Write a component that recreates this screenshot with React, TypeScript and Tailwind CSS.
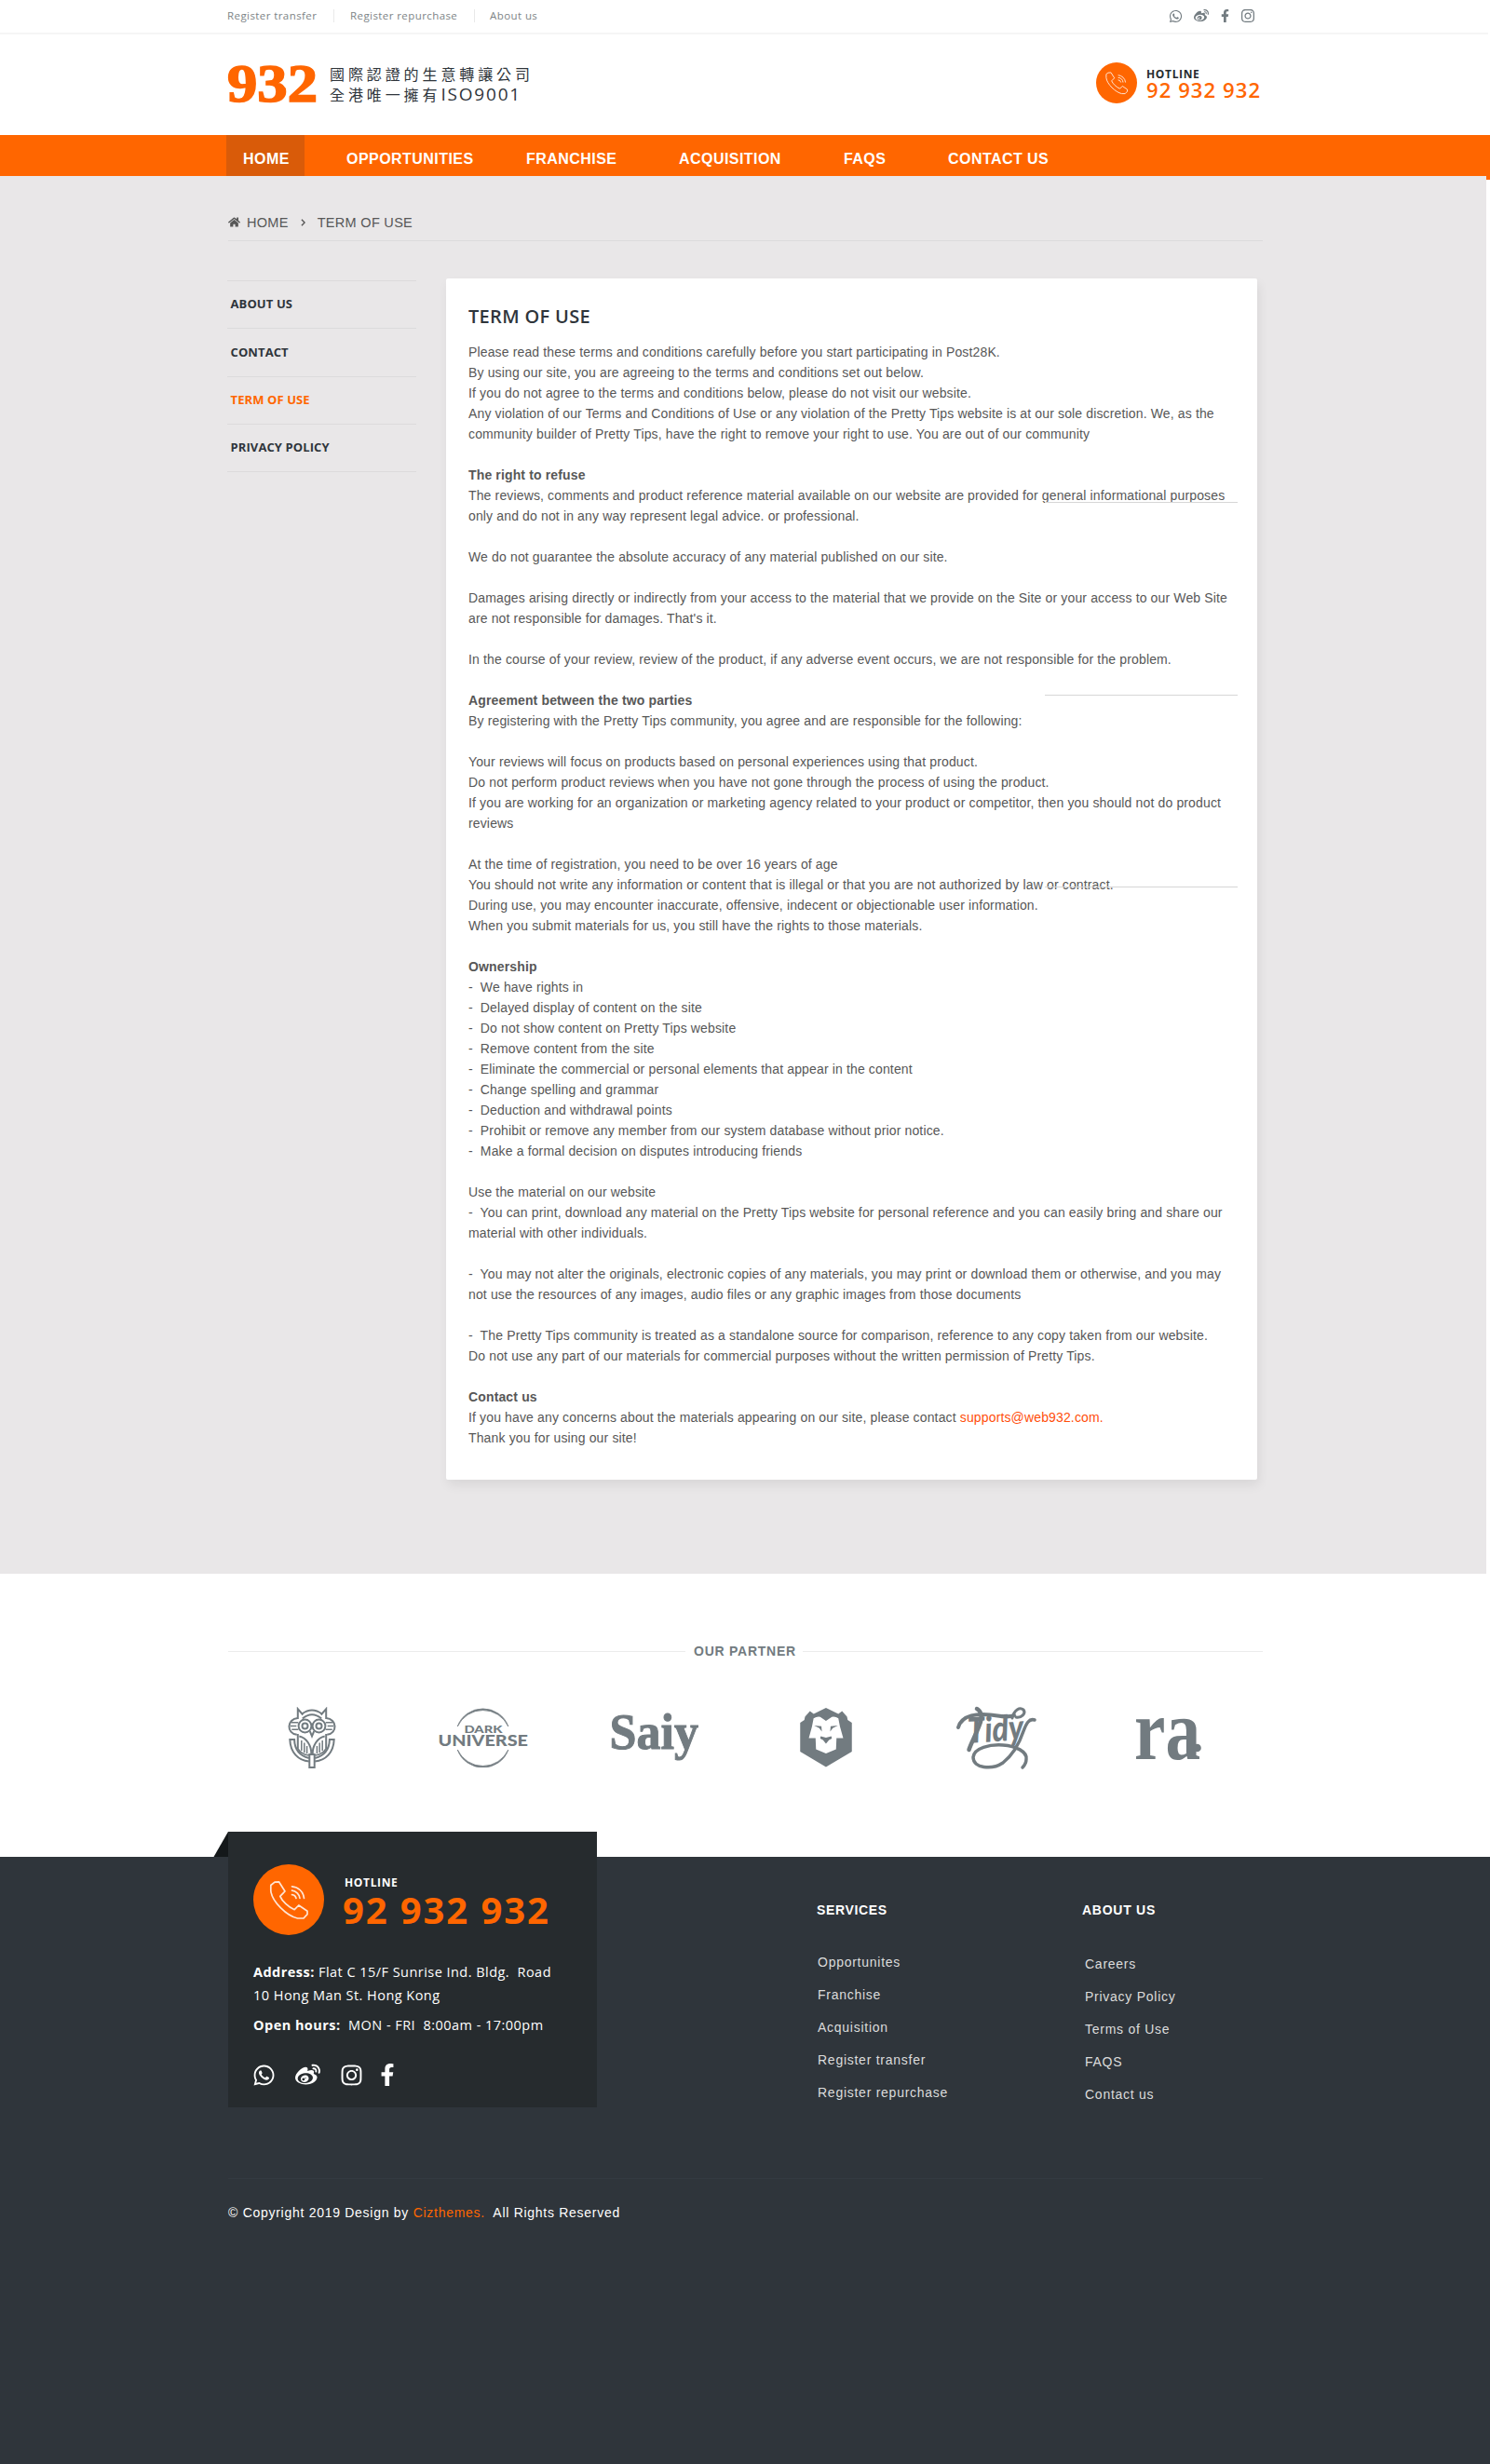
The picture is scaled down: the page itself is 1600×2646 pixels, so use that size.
import React from "react";
import { FaWhatsapp, FaWeibo, FaInstagram, FaFacebookF, FaHome } from "react-icons/fa";

const navItems = [
  { label: "OPPORTUNITIES", cls: "w-[193px]" },
  { label: "FRANCHISE", cls: "w-[164px]" },
  { label: "ACQUISITION", cls: "w-[177px]" },
  { label: "FAQS", cls: "w-[112px]" },
  { label: "CONTACT US", cls: "w-[120px]" },
];

const services = ["Opportunites", "Franchise", "Acquisition", "Register transfer", "Register repurchase"];
const about = ["Careers", "Privacy Policy", "Terms of Use", "FAQS", "Contact us"];

type Line = { t: string; b?: boolean };
const terms: Line[] = [
  { t: "Please read these terms and conditions carefully before you start participating in Post28K." },
  { t: "By using our site, you are agreeing to the terms and conditions set out below." },
  { t: "If you do not agree to the terms and conditions below, please do not visit our website." },
  { t: "Any violation of our Terms and Conditions of Use or any violation of the Pretty Tips website is at our sole discretion. We, as the" },
  { t: "community builder of Pretty Tips, have the right to remove your right to use. You are out of our community" },
  { t: "" },
  { t: "The right to refuse", b: true },
  { t: "The reviews, comments and product reference material available on our website are provided for general informational purposes" },
  { t: "only and do not in any way represent legal advice. or professional." },
  { t: "" },
  { t: "We do not guarantee the absolute accuracy of any material published on our site." },
  { t: "" },
  { t: "Damages arising directly or indirectly from your access to the material that we provide on the Site or your access to our Web Site" },
  { t: "are not responsible for damages. That's it." },
  { t: "" },
  { t: "In the course of your review, review of the product, if any adverse event occurs, we are not responsible for the problem." },
  { t: "" },
  { t: "Agreement between the two parties", b: true },
  { t: "By registering with the Pretty Tips community, you agree and are responsible for the following:" },
  { t: "" },
  { t: "Your reviews will focus on products based on personal experiences using that product." },
  { t: "Do not perform product reviews when you have not gone through the process of using the product." },
  { t: "If you are working for an organization or marketing agency related to your product or competitor, then you should not do product" },
  { t: "reviews" },
  { t: "" },
  { t: "At the time of registration, you need to be over 16 years of age" },
  { t: "You should not write any information or content that is illegal or that you are not authorized by law or contract." },
  { t: "During use, you may encounter inaccurate, offensive, indecent or objectionable user information." },
  { t: "When you submit materials for us, you still have the rights to those materials." },
  { t: "" },
  { t: "Ownership", b: true },
  { t: "-  We have rights in" },
  { t: "-  Delayed display of content on the site" },
  { t: "-  Do not show content on Pretty Tips website" },
  { t: "-  Remove content from the site" },
  { t: "-  Eliminate the commercial or personal elements that appear in the content" },
  { t: "-  Change spelling and grammar" },
  { t: "-  Deduction and withdrawal points" },
  { t: "-  Prohibit or remove any member from our system database without prior notice." },
  { t: "-  Make a formal decision on disputes introducing friends" },
  { t: "" },
  { t: "Use the material on our website" },
  { t: "-  You can print, download any material on the Pretty Tips website for personal reference and you can easily bring and share our" },
  { t: "material with other individuals." },
  { t: "" },
  { t: "-  You may not alter the originals, electronic copies of any materials, you may print or download them or otherwise, and you may" },
  { t: "not use the resources of any images, audio files or any graphic images from those documents" },
  { t: "" },
  { t: "-  The Pretty Tips community is treated as a standalone source for comparison, reference to any copy taken from our website." },
  { t: "Do not use any part of our materials for commercial purposes without the written permission of Pretty Tips." },
  { t: "" },
  { t: "Contact us", b: true },
];

function PhoneBadge({ className }: { className: string }) {
  return (
    <svg viewBox="0 0 76 76" className={className} fill="none" stroke="#ffe6d5" strokeLinejoin="round" strokeLinecap="round">
      <circle cx="38" cy="38" r="38" fill="#ff6600" stroke="none" />
      <path strokeWidth="1.7" d="M23 19.2L27.5 18.8L34 29L28.8 34.3C31 39.5 37.5 46 44.2 48.7L48.8 44L58 50.2V53.7L54 58H47.5C36 55.5 20 40 18.8 28.5V22.5Z" />
      <path strokeWidth="1.7" d="M41.5 23.8A14 14 0 0 1 54.5 36.5M41.5 28.2A9.5 9.5 0 0 1 50 36.5M41.5 32.6A5 5 0 0 1 46 36.5" />
    </svg>
  );
}

function Owl() {
  return (
    <svg viewBox="0 0 51.4 66" className="h-[66px] w-[52px]" fill="none" stroke="#727b80" strokeWidth="2">
      <path d="M10.5 13V2.2L16 8.5M40.9 13V2.2L35.4 8.5" />
      <path d="M15 7.5Q25.7 -.5 36.4 7.5M15.5 12.5Q25.7 4 35.9 12.5" />
      <path d="M10.5 12C-1.5 13 -2 28.5 9.5 29.8M40.9 12C52.9 13 53.4 28.5 41.900 29.8" />
      <path d="M3.5 16.7H11M2.5 20.5H9M4 24.3H11M47.9 16.7H40.4M48.9 20.5H42.4M47.4 24.3H40.4" strokeWidth="1.6" />
      <circle cx="18.2" cy="20.5" r="6.9" />
      <circle cx="33.2" cy="20.5" r="6.9" />
      <circle cx="18.2" cy="20.5" r="3" />
      <circle cx="33.2" cy="20.5" r="3" />
      <path d="M23.5 26.2L25.7 31.5L27.9 26.2" />
      <path d="M10.5 29V44.5M40.9 29V44.5M12 31.5C20 33 25 42 25 50M39.4 31.5C31.4 33 26.4 42 26.4 50" />
      <path d="M14.5 36V47M17.5 38.5V49M20.3 42V50M36.9 36V47M33.9 38.5V49M31.1 42V50" strokeWidth="1.5" />
      <path d="M22.5 55C11 52 7 44 6.8 35H2C2.5 49 11 57.5 22.5 58.5M28.9 55C40.4 52 44.4 44 44.6 35H49.4C48.9 49 40.4 57.5 28.9 58.5" />
      <path d="M10 44C13 49 17 51.5 22.5 52M41.4 44C38.4 49 34.4 51.5 28.9 52" strokeWidth="1.5" />
      <path d="M23 51V65H28.4V51Z" />
    </svg>
  );
}

function DarkUniverse() {
  return (
    <svg viewBox="470 1834 98 64" className="h-[64px] w-[98px]" fill="#727b80" fontFamily="Lato, sans-serif">
      <path d="M491.3 1854A30 30 0 0 1 545.8 1854A28.8 28.2 0 0 0 491.3 1854ZM491.3 1879A30 30 0 0 0 545.8 1879A28.8 28.2 0 0 1 491.3 1879Z" stroke="#727b80" strokeWidth=".8" />
      <text x="498.5" y="1860.7" fontSize="11.5" fontWeight="900" textLength="41" lengthAdjust="spacingAndGlyphs">DARK</text>
      <text x="470.5" y="1875" fontSize="16.5" fontWeight="900" textLength="96.5" lengthAdjust="spacingAndGlyphs">UNIVERSE</text>
    </svg>
  );
}

function Saiy() {
  return (
    <svg viewBox="655 1838 96 56" className="h-[56px] w-[96px] overflow-visible" fill="#727b80">
      <text x="654.5" y="1877.5" fontSize="55" fontFamily="Liberation Serif, serif" fontWeight="700" textLength="95.5" lengthAdjust="spacingAndGlyphs" stroke="#727b80" strokeWidth="1">Saiy</text>
    </svg>
  );
}

function Lion() {
  return (
    <svg viewBox="0 0 55.5 64" className="h-[64px] w-[56px]" fill="#727b80">
      <path d="M27.7 0L41 6.5L45 3.5L50.3 9.5L51 13L55.5 16V47L27.7 63.5L0 47V16L4.5 13L5.2 9.5L10.5 3.5L14.5 6.5Z" />
      <path fill="#fff" d="M14.4 11.2Q18 9 21.5 9.7L27.7 14L34 9.7Q38 9 41 11.2L42.7 20L46.2 32.5H39L38.5 44.5L27.7 49L17 44.5L16.5 32.5H9.3L12.7 20Z" />
      <path d="M15 19L22.8 19.7L23.3 25.5L20.5 21.8ZM40.5 19L32.7 19.7L32.2 25.5L35 21.8ZM22 30.5L27.7 32L33.5 30.5L34 33L31 34.5L27.7 38.5L24.5 34.5L21.5 33Z" />
    </svg>
  );
}

function Tidy() {
  return (
    <svg viewBox="0 0 87 67" className="h-[67px] w-[87px] overflow-visible" fill="none" stroke="#727b80" strokeLinecap="round">
      <text x="13" y="39" transform="rotate(-4 13 39)" fontSize="38" fontFamily="Lato, sans-serif" fontStyle="italic" fontWeight="900" textLength="60" lengthAdjust="spacingAndGlyphs" fill="#727b80" stroke="none">Tidy</text>
      <path strokeWidth="4" d="M2 22C6 8 24 7 36 8.5C48 10 56 12 62 9" />
      <path strokeWidth="3" d="M60 12C62 3 68 0 72 3C75 7 70 12 64 11" />
      <path strokeWidth="4.5" d="M22 2C26 4 28 10 26 16C22 28 16 38 13.5 46" />
      <path strokeWidth="3.5" d="M84 14C78 12 75 18 72 26C68 38 60 52 50 60C38 68 18 66 18 54C19 44 36 40 50 41C64 42 76 48 75 56C75 60 74 62 71 65" />
    </svg>
  );
}

function Ra() {
  return (
    <svg viewBox="1219 1838 72 56" className="h-[56px] w-[72px] overflow-visible" fill="#727b80">
      <text x="1218" y="1888.5" fontSize="94" fontFamily="Liberation Serif, serif" fontWeight="700" textLength="71" lengthAdjust="spacingAndGlyphs">ra</text>
      <circle cx="1285.5" cy="1877" r="4.3" />
    </svg>
  );
}

export default function App() {
  return (
    <div className="flex h-[2646px] w-[1600px] flex-col overflow-hidden bg-white font-['Liberation_Sans',Arial,sans-serif]">
      <div className="flex h-[37px] w-[1598px] shrink-0 border-b-2 border-[#f5f5f5] pl-[244px] text-[#7d8486]">
        <div className="flex h-[34px] grow items-center font-['Open_Sans',sans-serif] text-[11.5px] leading-[20px] tracking-[0.42px]">
          <span className="w-[114px]">Register transfer</span>
          <span className="mr-[17px] h-[14px] w-px bg-[#e9e9e9]" />
          <span className="w-[133px]">Register repurchase</span>
          <span className="mr-[16px] h-[14px] w-px bg-[#e9e9e9]" />
          <span>About us</span>
        </div>
        <div className="flex h-[34px] w-[343px] items-center text-[#727b80]">
          <FaWhatsapp className="h-[15px] w-[15px]" />
          <FaWeibo className="ml-[12px] h-[16px] w-[16px]" />
          <FaFacebookF className="ml-[13px] h-[14px] w-[9px]" />
          <FaInstagram className="ml-[12px] h-[16px] w-[16px]" />
        </div>
      </div>

      <header className="flex h-[108px] shrink-0 items-start pl-[245px]">
        <svg viewBox="0 0 95 40" className="mt-[33px] h-[40px] w-[95px] overflow-visible">
          <text x="-1" y="39" fontSize="57" fontFamily="Liberation Serif, serif" fontWeight="700" fill="#ff6600" stroke="#ff6600" strokeWidth="1.6" textLength="97" lengthAdjust="spacingAndGlyphs">932</text>
        </svg>
        <div className="mt-[31px] ml-[14px] w-[823px] font-['Noto_Sans_CJK_TC',sans-serif] text-[16px] leading-[22px] font-normal tracking-[3.9px] text-[#2f353b]">
          <p>國際認證的生意轉讓公司</p>
          <p>全港唯一擁有<span className="font-['Open_Sans',sans-serif] text-[19px] leading-[20px] tracking-[1.8px]">ISO9001</span></p>
        </div>
        <PhoneBadge className="mt-[30px] h-[44px] w-[44px]" />
        <div className="mt-[35px] ml-[10px] font-['Open_Sans',sans-serif]">
          <p className="text-[12px] leading-[16px] font-bold tracking-[0.65px] text-[#262b2e]">HOTLINE</p>
          <p className="-mt-[2px] text-[22px] leading-[20px] font-semibold tracking-[1.1px] text-[#ff6600]">92 932 932</p>
        </div>
      </header>

      <div className="flex h-[1545px] shrink-0 bg-white">
        <main className="w-[1596px] bg-[#e9e7e8]">
          <nav className="flex h-[44px] bg-[#ff6600] pl-[243px] text-[16px] leading-[52px] font-bold tracking-[0.45px] text-white">
            <span className="mr-[45px] w-[84px] bg-[#d95b09] pl-[18px]">HOME</span>
            {navItems.map((n) => (
              <span key={n.label} className={n.cls}>{n.label}</span>
            ))}
          </nav>
          <div className="ml-[245px] flex h-[70px] w-[1111px] items-center border-b border-[#dcdbdc] pt-[30px] text-[14.5px] leading-[20px] tracking-[0.3px] text-[#575757]">
            <FaHome className="h-[13px] w-[13px]" />
            <span className="ml-[7px]">HOME</span>
            <svg viewBox="0 0 6 10" className="ml-[13px] h-[8px] w-[5px]" fill="none" stroke="#575757" strokeWidth="1.8"><path d="M1 1L5 5L1 9" /></svg>
            <span className="ml-[13px]">TERM OF USE</span>
          </div>
          <div className="flex pt-[40px] pl-[244px]">
            <aside className="mt-[2px] h-[206px] w-[203px] border-t border-[#dcdbdc] font-['Open_Sans',sans-serif] text-[13px] leading-[20px] font-bold tracking-[0.1px] text-[#2f353b]">
              <p className="h-[51px] border-b border-[#dcdbdc] pt-[14px] pl-[3.5px]">ABOUT US</p>
              <p className="h-[52px] border-b border-[#dcdbdc] pt-[15px] pl-[3.5px]">CONTACT</p>
              <p className="h-[51px] border-b border-[#dcdbdc] pt-[14px] pl-[3.5px] text-[#ff6600]">TERM OF USE</p>
              <p className="h-[51px] border-b border-[#dcdbdc] pt-[14px] pl-[3.5px]">PRIVACY POLICY</p>
            </aside>
            <section className="relative ml-[32px] h-[1290px] w-[871px] rounded-[2px] bg-white pt-[28px] pl-[24px] shadow-[2px_6px_12px_rgba(0,0,0,0.07)]">
              <h1 className="font-['Open_Sans',sans-serif] text-[20px] leading-[26px] font-semibold tracking-[0.32px] text-[#2f353b]">TERM OF USE</h1>
              <div className="mt-[14px] text-[14px] leading-[22px] tracking-[0.142px] whitespace-pre text-[#575757]">
                {terms.map((l, i) => (
                  <p key={i} className={l.b ? "h-[22px] font-bold" : "h-[22px]"}>{l.t}</p>
                ))}
                <p className="h-[22px]">If you have any concerns about the materials appearing on our site, please contact <span className="text-[#ff4e0a]">supports@web932.com.</span></p>
                <p className="h-[22px]">Thank you for using our site!</p>
              </div>
              <span className="absolute top-[240px] left-[643px] h-px w-[207px] bg-[#d6d6d6]" />
              <span className="absolute top-[447px] left-[643px] h-px w-[207px] bg-[#d6d6d6]" />
              <span className="absolute top-[653px] left-[643px] h-px w-[207px] bg-[#d6d6d6]" />
            </section>
          </div>
        </main>
        <div className="h-[48px] w-[4px] bg-[#ff6600]" />
      </div>

      <section className="h-[304px] shrink-0 pt-[73px] pl-[245px]">
        <div className="flex w-[1111px] items-center text-[14px] leading-[20px] font-bold tracking-[0.75px] text-[#727b80]">
          <span className="h-px w-[491px] bg-[#ececec]" />
          <span className="ml-[9px] w-[117px]">OUR PARTNER</span>
          <span className="h-px grow bg-[#ececec]" />
        </div>
        <div className="mt-[49px] flex h-[68px] items-center pl-[64px]">
          <Owl />
          <div className="ml-[109px]"><DarkUniverse /></div>
          <div className="ml-[87px]"><Saiy /></div>
          <div className="ml-[108px]"><Lion /></div>
          <div className="ml-[112px]"><Tidy /></div>
          <div className="ml-[105px]"><Ra /></div>
        </div>
      </section>

      <footer className="relative flex grow flex-col bg-[#2f353b] pl-[245px] text-white">
        <svg viewBox="0 0 16 27" className="absolute -top-[27px] left-[229px] h-[27px] w-[16px]"><path d="M16 0V27H.5Z" fill="#14181a" /></svg>
        <div className="flex h-[346px] w-[1111px] shrink-0 border-b border-[#333a41]">
          <div className="relative -mt-[27px] h-[296px] w-[396px] bg-[#262b2e] pt-[35px] pl-[27px] font-['Open_Sans',sans-serif]">
            <div className="flex h-[76px]">
              <PhoneBadge className="h-[76px] w-[76px]" />
              <div className="ml-[20px] pt-[11px] font-bold">
                <p className="pl-[2px] text-[12px] leading-[18px] tracking-[0.65px]">HOTLINE</p>
                <p className="-mt-[2px] text-[40px] leading-[44px] tracking-[1.9px] text-[#ff6600]">92 932 932</p>
              </div>
            </div>
            <div className="mt-[27px] text-[14.5px] leading-[25px] tracking-[0.46px] whitespace-pre">
              <p><b>Address:</b> Flat C 15/F Sunrise Ind. Bldg.  Road</p>
              <p>10 Hong Man St. Hong Kong</p>
              <p className="mt-[7px]"><b>Open hours:</b>  MON - FRI  8:00am - 17:00pm</p>
            </div>
            <div className="mt-[28px] flex h-[26px] items-center">
              <FaWhatsapp className="-ml-px h-[25px] w-[25px]" />
              <FaWeibo className="ml-[21px] h-[27px] w-[27px]" />
              <FaInstagram className="ml-[21px] h-[25px] w-[25px]" />
              <FaFacebookF className="ml-[18px] h-[24px] w-[16px]" />
            </div>
          </div>
          <div className="ml-[236px] w-[285px] pt-[47px] text-[14px] leading-[35px] tracking-[0.74px] text-[#dcdcdc]">
            <h2 className="mb-[29px] leading-[20px] font-bold tracking-[0.65px] text-white">SERVICES</h2>
            {services.map((s) => <p key={s} className="pl-px">{s}</p>)}
          </div>
          <div className="pt-[47px] text-[14px] leading-[35px] tracking-[0.74px] text-[#dcdcdc]">
            <h2 className="mb-[31px] leading-[20px] font-bold text-white">ABOUT US</h2>
            {about.map((s) => <p key={s} className="pl-[3px]">{s}</p>)}
          </div>
        </div>
        <p className="mt-[26px] text-[14px] leading-[20px] tracking-[0.72px] whitespace-pre">© Copyright 2019 Design by <span className="text-[#ff6600]">Cizthemes.</span>  All Rights Reserved</p>
      </footer>
    </div>
  );
}
